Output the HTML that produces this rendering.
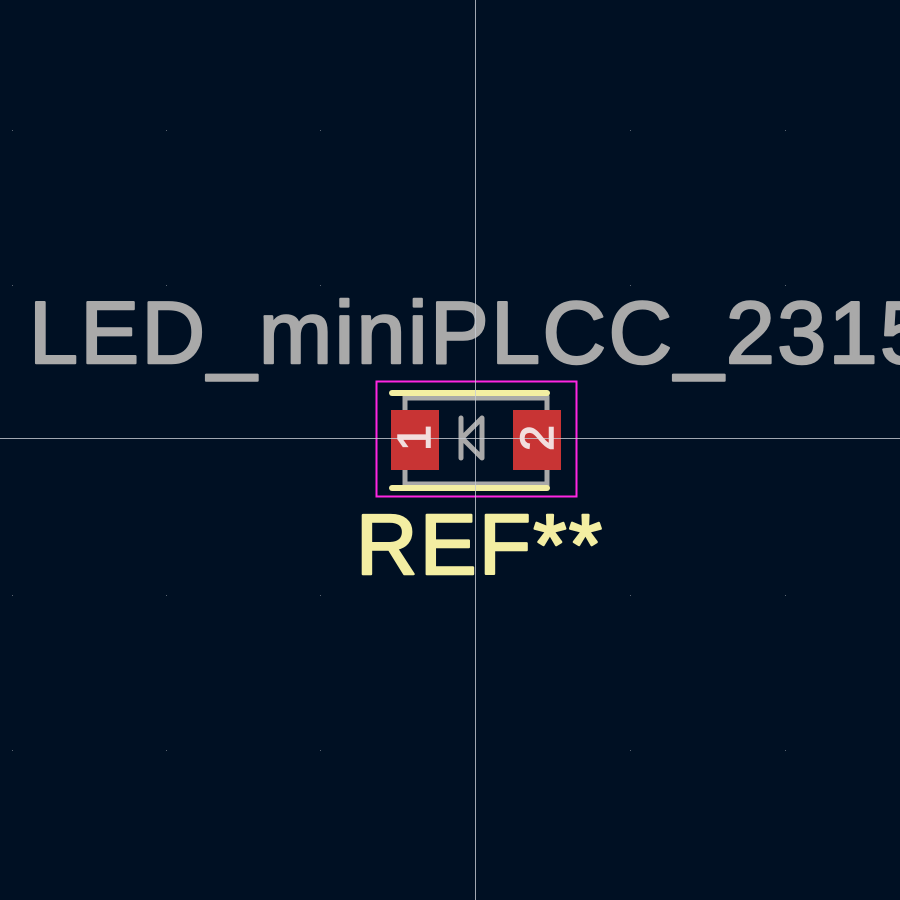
<!DOCTYPE html>
<html><head><style>html,body{margin:0;padding:0;background:#001023;}svg{display:block}</style></head>
<body>
<svg width="900" height="900" xmlns="http://www.w3.org/2000/svg">
<rect width="900" height="900" fill="#001023"/>
<g fill="#5a6470">
<rect x="12" y="130" width="1" height="1"/><rect x="166" y="130" width="1" height="1"/><rect x="320" y="130" width="1" height="1"/><rect x="630" y="130" width="1" height="1"/><rect x="785" y="130" width="1" height="1"/>
<rect x="12" y="285" width="1" height="1"/><rect x="166" y="285" width="1" height="1"/><rect x="320" y="285" width="1" height="1"/><rect x="630" y="285" width="1" height="1"/><rect x="785" y="285" width="1" height="1"/>
<rect x="12" y="595" width="1" height="1"/><rect x="166" y="595" width="1" height="1"/><rect x="320" y="595" width="1" height="1"/><rect x="630" y="595" width="1" height="1"/><rect x="785" y="595" width="1" height="1"/>
<rect x="12" y="750" width="1" height="1"/><rect x="166" y="750" width="1" height="1"/><rect x="320" y="750" width="1" height="1"/><rect x="630" y="750" width="1" height="1"/><rect x="785" y="750" width="1" height="1"/>
</g>
<text x="29" y="363" font-family="Liberation Sans, sans-serif" font-size="88" fill="#a9a9a9" stroke="#a9a9a9" stroke-width="2.5" stroke-linejoin="round" textLength="900" lengthAdjust="spacing">LED_miniPLCC_2315</text>
<text x="356" y="574" font-family="Liberation Sans, sans-serif" font-size="85" fill="#f3eea2" stroke="#f3eea2" stroke-width="2.5" stroke-linejoin="round" textLength="246" lengthAdjust="spacing">REF**</text>
<rect x="405" y="398" width="142" height="86" fill="none" stroke="#a9a9a9" stroke-width="5"/>
<line x1="392" y1="393" x2="547" y2="393" stroke="#f3eea2" stroke-width="6" stroke-linecap="round"/>
<line x1="392" y1="488" x2="547" y2="488" stroke="#f3eea2" stroke-width="6" stroke-linecap="round"/>
<rect x="391" y="410" width="48" height="60" fill="#c83434"/>
<rect x="513" y="410" width="48" height="60" fill="#c83434"/>
<g fill="none" stroke="#a9a9a9" stroke-width="5" stroke-linecap="round" stroke-linejoin="round">
<line x1="461" y1="418" x2="461" y2="458"/>
<polyline points="482,418 462,438 482,458 482,418"/>
</g>
<rect x="376.5" y="381.5" width="200" height="115" fill="none" stroke="#ff26e2" stroke-width="2"/>
<line x1="475.5" y1="0" x2="475.5" y2="900" stroke="#c8ccd4" stroke-width="1" opacity="0.8"/>
<line x1="0" y1="438.5" x2="900" y2="438.5" stroke="#c8ccd4" stroke-width="1" opacity="0.8"/>
<text transform="translate(430,438) rotate(-90)" text-anchor="middle" font-family="Liberation Sans, sans-serif" font-size="46" fill="#f2dede" stroke="#f2dede" stroke-width="1.5">1</text>
<text transform="translate(553,438) rotate(-90)" text-anchor="middle" font-family="Liberation Sans, sans-serif" font-size="46" fill="#f2dede" stroke="#f2dede" stroke-width="1.5">2</text>
</svg>
</body></html>
